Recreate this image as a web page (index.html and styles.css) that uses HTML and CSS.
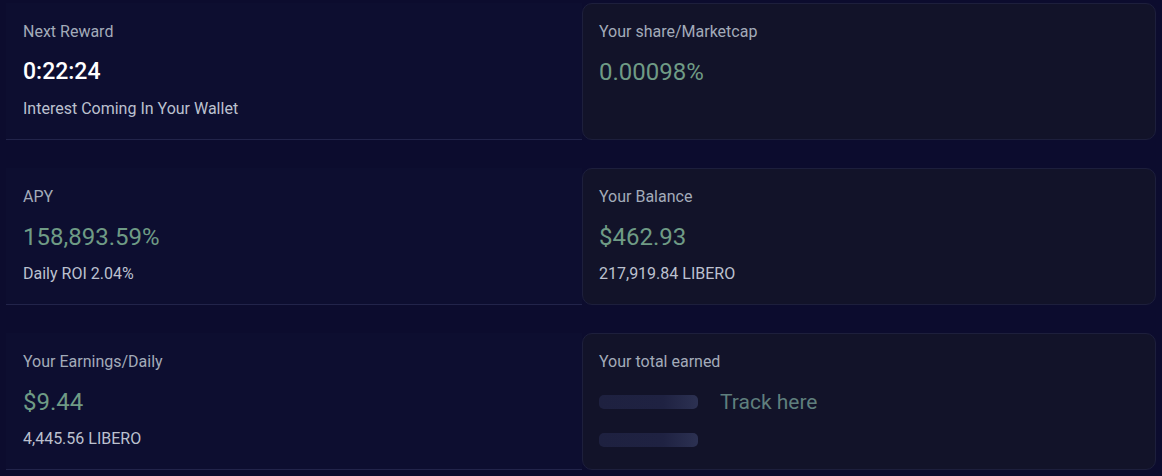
FILE: index.html
```html
<!DOCTYPE html>
<html>
<head>
<meta charset="utf-8">
<link rel="stylesheet" href="styles.css">
</head>
<body>
<div class="grid">
  <div class="card plain">
    <div class="label">Next Reward</div>
    <div class="value white">0:22:24</div>
    <div class="sub">Interest Coming In Your Wallet</div>
  </div>
  <div class="card boxed">
    <div class="label">Your share/Marketcap</div>
    <div class="value green">0.00098%</div>
  </div>
  <div class="card plain">
    <div class="label">APY</div>
    <div class="value green">158,893.59%</div>
    <div class="sub">Daily ROI 2.04%</div>
  </div>
  <div class="card boxed">
    <div class="label">Your Balance</div>
    <div class="value green">$462.93</div>
    <div class="sub">217,919.84 LIBERO</div>
  </div>
  <div class="card plain">
    <div class="label">Your Earnings/Daily</div>
    <div class="value green">$9.44</div>
    <div class="sub">4,445.56 LIBERO</div>
  </div>
  <div class="card boxed">
    <div class="label">Your total earned</div>
    <div class="track">
      <div class="bars">
        <span class="bar"></span>
        <span class="bar"></span>
      </div>
      <div class="track-link">Track here</div>
    </div>
  </div>
</div>
</body>
</html>
```
FILE: styles.css
```css
html, body {
  margin: 0;
  padding: 0;
  background: #0c0c2e;
  font-family: Roboto, "Liberation Sans", sans-serif;
}
.grid {
  display: grid;
  grid-template-columns: 576px 574px;
  row-gap: 28px;
  padding: 3px 6px 0 6px;
}
.card {
  box-sizing: border-box;
  height: 137px;
  padding: 19px 16px 0 17px;
}
.card.plain {
  border-bottom: 1px solid #22244a;
  background: #0d0e30;
}
.card.boxed {
  background: #121329;
  border: 1px solid #1d1f3c;
  border-radius: 10px;
  padding-left: 16px;
  padding-top: 18px;
}
.label {
  font-size: 16px;
  line-height: 20px;
  color: #a3abb9;
}
.value {
  margin-top: 16px;
  font-size: 24px;
  line-height: 28px;
}
.value.white {
  color: #ffffff;
  font-size: 23px;
  font-weight: 500;
}
.value.green {
  color: #6f9b85;
}
.sub {
  margin-top: 13px;
  font-size: 16px;
  line-height: 20px;
  color: #bcc1cf;
}
.track {
  display: flex;
  gap: 22px;
  margin-top: 17px;
}
.bars {
  display: flex;
  flex-direction: column;
  gap: 24px;
  padding-top: 6px;
}
.bar {
  display: block;
  width: 99px;
  height: 14px;
  border-radius: 5px;
  background: linear-gradient(90deg, #1e2140 0%, #1f2242 65%, #2c3152 100%);
}
.track-link {
  font-size: 21px;
  line-height: 26px;
  color: #5f7f7d;
}
```
